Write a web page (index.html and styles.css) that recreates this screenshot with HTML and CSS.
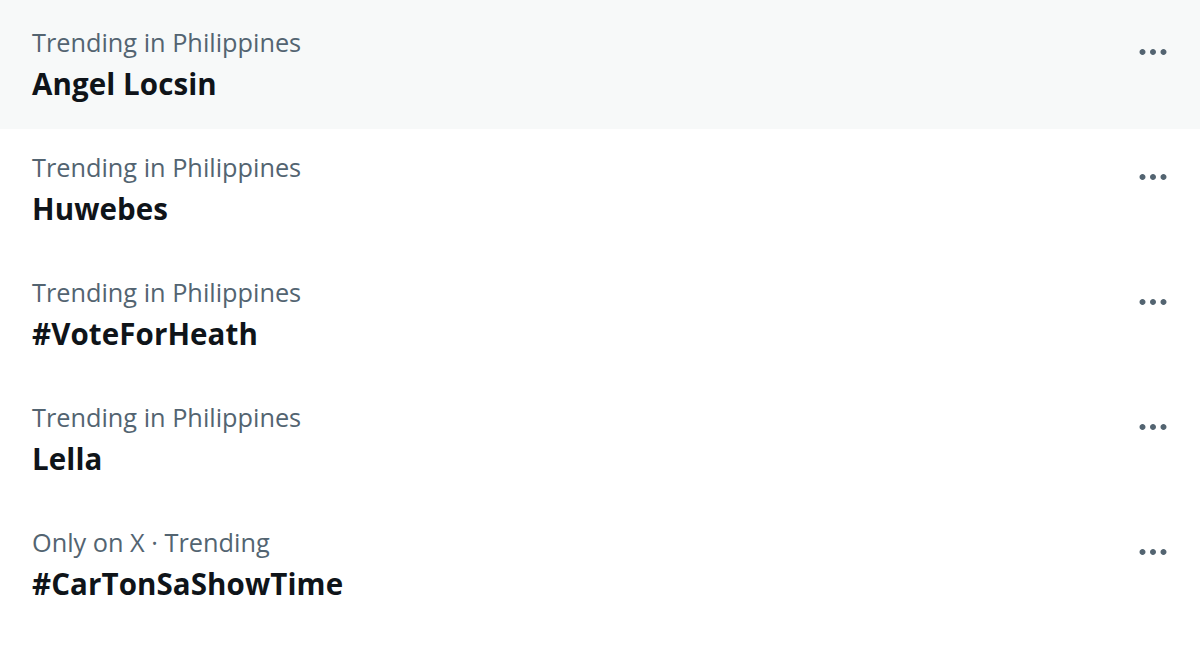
FILE: index.html
```html
<!DOCTYPE html>
<html lang="en">
<head>
<meta charset="utf-8">
<title>Trends</title>
<link rel="stylesheet" href="styles.css">
</head>
<body>
<div class="trends">
  <div class="trend hover">
    <div class="info">
      <div class="meta">Trending in Philippines</div>
      <div class="name">Angel Locsin</div>
    </div>
    <div class="more"><svg viewBox="0 0 24 24"><path d="M3 12c0-1.1.9-2 2-2s2 .9 2 2-.9 2-2 2-2-.9-2-2zm9 2c1.1 0 2-.9 2-2s-.9-2-2-2-2 .9-2 2 .9 2 2 2zm7 0c1.1 0 2-.9 2-2s-.9-2-2-2-2 .9-2 2 .9 2 2 2z"/></svg></div>
  </div>
  <div class="trend">
    <div class="info">
      <div class="meta">Trending in Philippines</div>
      <div class="name">Huwebes</div>
    </div>
    <div class="more"><svg viewBox="0 0 24 24"><path d="M3 12c0-1.1.9-2 2-2s2 .9 2 2-.9 2-2 2-2-.9-2-2zm9 2c1.1 0 2-.9 2-2s-.9-2-2-2-2 .9-2 2 .9 2 2 2zm7 0c1.1 0 2-.9 2-2s-.9-2-2-2-2 .9-2 2 .9 2 2 2z"/></svg></div>
  </div>
  <div class="trend">
    <div class="info">
      <div class="meta">Trending in Philippines</div>
      <div class="name">#VoteForHeath</div>
    </div>
    <div class="more"><svg viewBox="0 0 24 24"><path d="M3 12c0-1.1.9-2 2-2s2 .9 2 2-.9 2-2 2-2-.9-2-2zm9 2c1.1 0 2-.9 2-2s-.9-2-2-2-2 .9-2 2 .9 2 2 2zm7 0c1.1 0 2-.9 2-2s-.9-2-2-2-2 .9-2 2 .9 2 2 2z"/></svg></div>
  </div>
  <div class="trend">
    <div class="info">
      <div class="meta">Trending in Philippines</div>
      <div class="name">Lella</div>
    </div>
    <div class="more"><svg viewBox="0 0 24 24"><path d="M3 12c0-1.1.9-2 2-2s2 .9 2 2-.9 2-2 2-2-.9-2-2zm9 2c1.1 0 2-.9 2-2s-.9-2-2-2-2 .9-2 2 .9 2 2 2zm7 0c1.1 0 2-.9 2-2s-.9-2-2-2-2 .9-2 2 .9 2 2 2z"/></svg></div>
  </div>
  <div class="trend">
    <div class="info">
      <div class="meta">Only on X · Trending</div>
      <div class="name">#CarTonSaShowTime</div>
    </div>
    <div class="more"><svg viewBox="0 0 24 24"><path d="M3 12c0-1.1.9-2 2-2s2 .9 2 2-.9 2-2 2-2-.9-2-2zm9 2c1.1 0 2-.9 2-2s-.9-2-2-2-2 .9-2 2 .9 2 2 2zm7 0c1.1 0 2-.9 2-2s-.9-2-2-2-2 .9-2 2 .9 2 2 2z"/></svg></div>
  </div>
</div>
</body>
</html>
```

FILE: styles.css
```css
html, body {
  margin: 0;
  padding: 0;
  background: #ffffff;
}
body {
  font-family: "Open Sans", "Noto Sans", "Liberation Sans", sans-serif;
}
.trends {
  display: flex;
  flex-direction: column;
}
.trend {
  display: flex;
  justify-content: space-between;
  align-items: flex-start;
  height: 125px;
  box-sizing: border-box;
  padding: 23px 29px 0 32px;
}
.trend.hover {
  background: #f7f9f9;
  height: 129px;
  padding-top: 27px;
}
.info {
  display: flex;
  flex-direction: column;
  gap: 9px;
}
.meta {
  font-size: 25.3px;
  line-height: 30px;
  color: #536471;
}
.name {
  font-size: 29.5px;
  line-height: 36px;
  font-weight: 700;
  color: #0f1419;
  letter-spacing: 0.1px;
}
.more {
  width: 36px;
  height: 36px;
  margin-top: 7px;
}
.more svg {
  width: 36px;
  height: 36px;
  fill: #536471;
  display: block;
}
```
